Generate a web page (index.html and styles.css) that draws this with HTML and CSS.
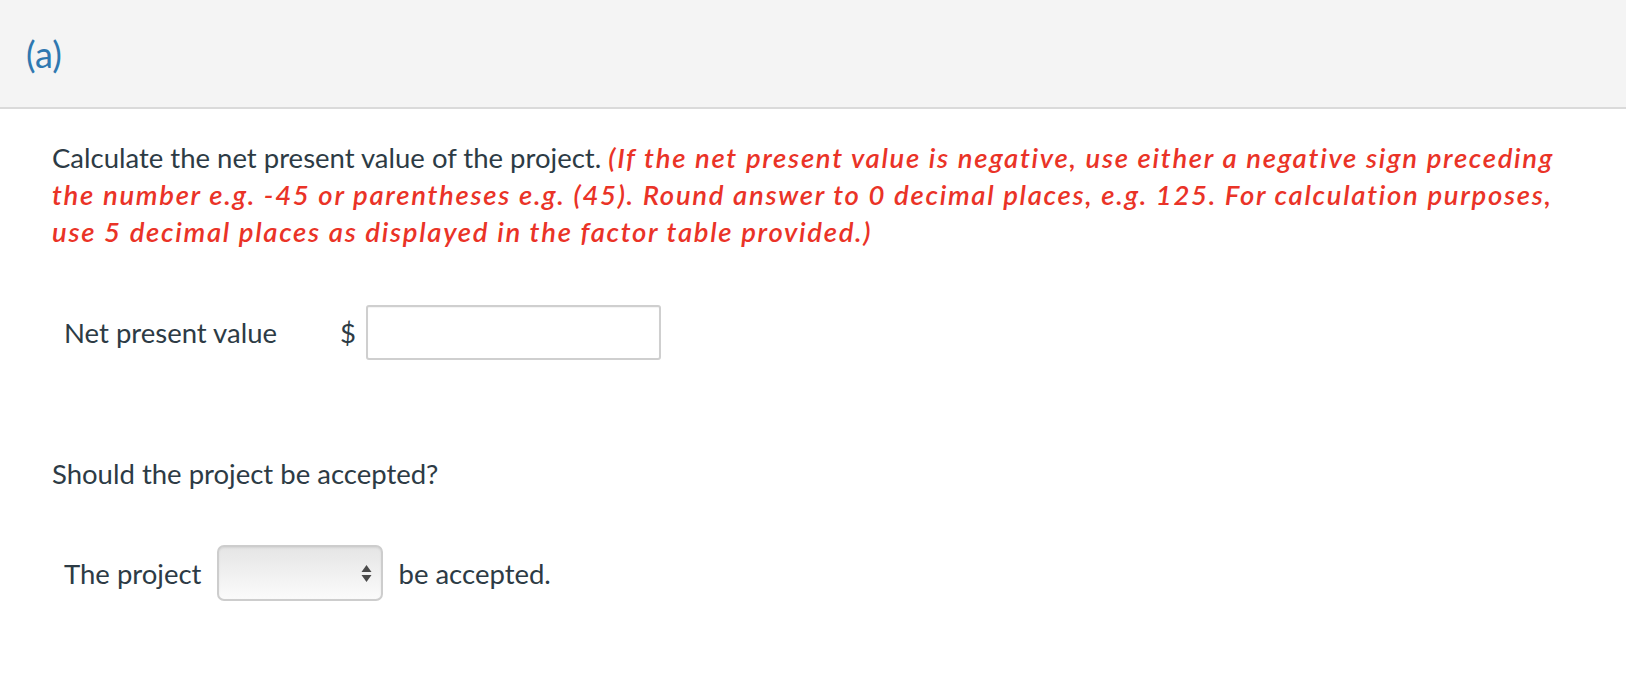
FILE: index.html
```html
<!DOCTYPE html>
<html>
<head>
<meta charset="utf-8">
<link rel="stylesheet" href="styles.css">
</head>
<body>
<div class="part-header"><span class="part-label">(a)</span></div>
<div class="content">
  <p class="question">Calculate the net present value of the project. <em class="hint">(If the net present value is negative, use either a negative sign preceding the number e.g. -45 or parentheses e.g. (45). Round answer to 0 decimal places, e.g. 125. For calculation purposes, use 5 decimal places as displayed in the factor table provided.)</em></p>
  <div class="answer-row npv-row">
    <span class="label">Net present value</span>
    <span class="currency">$</span>
    <span class="input-box"></span>
  </div>
  <p class="question q2">Should the project be accepted?</p>
  <div class="answer-row select-row">
    <span class="label">The project</span>
    <span class="select-box">
      <svg class="arrows" width="11" height="19" viewBox="0 0 11 19"><path d="M5.5 1 L10.5 8 L0.5 8 Z" fill="#4a4a4a"/><path d="M5.5 18 L10.5 11 L0.5 11 Z" fill="#4a4a4a"/></svg>
    </span>
    <span class="label-after">be accepted.</span>
  </div>
</div>
</body>
</html>
```

FILE: styles.css
```css
body {
  margin: 0;
  background: #ffffff;
  font-family: Lato, "Open Sans", sans-serif;
  color: #2d3b45;
}

.part-header {
  background: #f4f4f4;
  border-bottom: 2px solid #dadada;
  display: flex;
  align-items: center;
  padding-left: 26px;
  box-sizing: border-box;
  height: 109px;
}

.part-label {
  font-size: 36px;
  color: #2f78b0;
}

.content {
  padding: 0 48px 0 52px;
}

.question {
  font-size: 27.5px;
  line-height: 37px;
  margin: 30px 0 0 0;
}

.hint {
  color: #ea3327;
  font-weight: 600;
  font-style: italic;
  letter-spacing: 1.7px;
}

.answer-row {
  display: flex;
  align-items: center;
  padding-left: 12px;
  font-size: 27.5px;
}

.npv-row {
  margin-top: 55px;
}

.npv-row .label {
  width: 276px;
}

.currency {
  width: 26px;
}

.input-box {
  width: 295px;
  height: 55px;
  box-sizing: border-box;
  border: 2px solid #cfcfcf;
  border-radius: 3px;
  background: #fff;
  box-shadow: inset 0 1px 1px rgba(0,0,0,0.05);
}

.q2 {
  margin-top: 95px;
}

.select-row {
  margin-top: 53px;
}

.select-row .label {
  margin-right: 16px;
}

.select-box {
  width: 166px;
  height: 56px;
  box-sizing: border-box;
  border: 2px solid #cdcdcd;
  border-radius: 7px;
  background: linear-gradient(#e5e5e5, #fbfbfb);
  box-shadow: inset 0 1px 2px rgba(0,0,0,0.08);
  display: flex;
  align-items: center;
  justify-content: flex-end;
  padding-right: 9px;
}

.label-after {
  margin-left: 15px;
}
```
